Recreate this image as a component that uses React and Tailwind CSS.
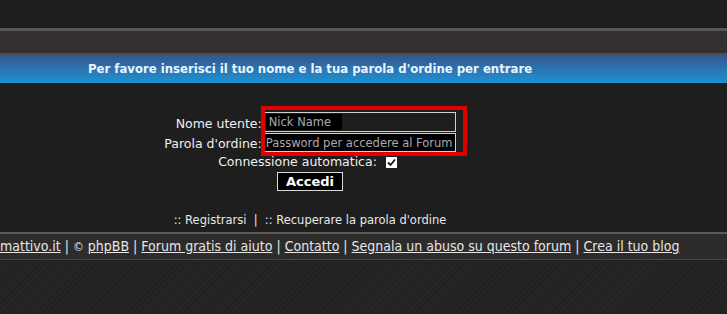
import React from 'react';

export default function App() {
  return (
    <div className="relative w-[727px] h-[314px] overflow-hidden bg-[#1e1e1e] font-['DejaVu_Sans',sans-serif] text-[#f0f0f0]">
      {/* Top strips */}
      <div className="h-[28px] bg-[#1e1e1e]" />
      <div className="h-[3px] bg-[#575757]" />
      <div className="h-[22px] bg-[#33302f]" />
      <div className="h-[2px] bg-[#4b4e5c]" />

      {/* Title bar */}
      <div className="h-[29px] bg-gradient-to-b from-[#30578f] to-[#1a92d2] flex items-center pl-[88px] border-b border-[#15212a]">
        <span className="font-['DejaVu_Sans_Condensed','DejaVu_Sans',sans-serif] [font-stretch:condensed] font-bold text-[13px] text-[#eaf5ff]">
          Per favore inserisci il tuo nome e la tua parola d'ordine per entrare
        </span>
      </div>

      {/* Login form */}
      <div className="w-[620px] flex flex-col items-center pt-[28px]">
        <div className="grid grid-cols-[auto_192px] gap-x-[2px] gap-y-[1px] text-[12.5px] items-center whitespace-nowrap">
          <label className="text-right pt-[3px] leading-[17px]">Nome utente:</label>
          <div className="h-[20px] border border-[#d0d0d0] flex items-center px-[1px]">
            <span className="bg-black text-[#a9a9b3] px-[3px] w-[76px] leading-[16px] text-[11.5px]">Nick Name</span>
          </div>
          <label className="text-right pt-[2px] leading-[17px]">Parola d'ordine:</label>
          <div className="h-[19px] border border-[#d0d0d0] bg-black flex items-center px-[1px] overflow-hidden">
            <span className="text-[#a9a9b3] text-[11.5px] leading-[16px] whitespace-nowrap">Password per accedere al Forum</span>
          </div>
        </div>
        <div className="flex items-center gap-[9px] text-[12.5px] leading-[18px] mt-[1px] mr-[5px]">
          <span>Connessione automatica:</span>
          <span className="w-[11px] h-[11px] bg-white flex items-center justify-center">
            <svg width="9" height="9" viewBox="0 0 9 9">
              <path d="M1 4.5 L3.5 7 L8 1.5" stroke="#111" strokeWidth="1.8" fill="none" />
            </svg>
          </span>
        </div>
        <button className="mt-[1px] w-[66px] h-[19px] bg-black border border-[#d8d8d8] font-bold text-[13px] leading-[16px] text-white">
          Accedi
        </button>
        <div className="mt-[22px] text-[11.5px] text-[#e8e8e8] leading-[14px] whitespace-nowrap">
          :: Registrarsi&nbsp;&nbsp;|&nbsp;&nbsp;:: Recuperare la parola d'ordine
        </div>
      </div>

      {/* Footer */}
      <div className="absolute left-0 right-0 top-[232px]">
        <div className="h-[2px] bg-[#5a5a5a]" />
        <div className="h-[25px] bg-[#2e2c2b] flex items-center whitespace-nowrap font-['DejaVu_Sans_Condensed','DejaVu_Sans',sans-serif] [font-stretch:condensed] text-[14px] text-[#e6e6e6]">
          <span className="underline">mattivo.it</span>
          <span className="px-[4px]">|</span>
          <span className="pr-[4px] text-[12px]">©</span>
          <span className="underline">phpBB</span>
          <span className="px-[4px]">|</span>
          <span className="underline">Forum gratis di aiuto</span>
          <span className="px-[4px]">|</span>
          <span className="underline">Contatto</span>
          <span className="px-[4px]">|</span>
          <span className="underline">Segnala un abuso su questo forum</span>
          <span className="px-[4px]">|</span>
          <span className="underline">Crea il tuo blog</span>
        </div>
        <div className="h-[1px] bg-[#474747]" />
        <div className="h-[60px] bg-[#242424] bg-[repeating-linear-gradient(135deg,#262626_0px,#262626_2px,#212121_2px,#212121_4px)]" />
      </div>

      {/* Red highlight annotation */}
      <div className="absolute left-[261px] top-[106px] w-[206px] h-[50px] border-4 border-[#e10000] pointer-events-none" />
    </div>
  );
}
